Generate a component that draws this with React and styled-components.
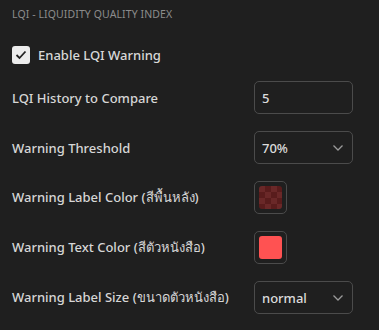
import styled, { createGlobalStyle } from 'styled-components'

const Global = createGlobalStyle`
  html, body {
    margin: 0;
    padding: 0;
    background: #1f1f1f;
  }
  body {
    font-family: "Noto Sans", "Open Sans", "DejaVu Sans", sans-serif;
    color: #d6d6d6;
  }
`

const Panel = styled.div`
  width: 379px;
  height: 330px;
  box-sizing: border-box;
  padding: 6px 26px 0 12px;
  background: #1f1f1f;
  display: flex;
  flex-direction: column;
`

const Title = styled.div`
  height: 16px;
  line-height: 16px;
  font-size: 10.5px;
  color: #8c8c8c;
  text-transform: uppercase;
  letter-spacing: 0.1px;
`

const CheckRow = styled.label`
  display: flex;
  align-items: center;
  gap: 8px;
  margin-top: 23px;
  height: 20px;
  font-size: 13px;
  font-weight: 500;
  color: #d8d8d8;
`

const Box = styled.span`
  width: 18px;
  height: 18px;
  border-radius: 3px;
  background: #ececec;
  display: flex;
  align-items: center;
  justify-content: center;
`

const Rows = styled.div`
  display: flex;
  flex-direction: column;
  gap: 17px;
  margin-top: 16px;
`

const Row = styled.div`
  display: flex;
  align-items: center;
  justify-content: space-between;
  height: 33px;
`

const Label = styled.span`
  font-size: 13px;
  font-weight: 500;
  color: #d6d6d6;
`

const Field = styled.div`
  width: 99px;
  height: 33px;
  box-sizing: border-box;
  border: 1px solid #4b4b4b;
  border-radius: 5px;
  display: flex;
  align-items: center;
  justify-content: space-between;
  padding: 0 8px 0 7px;
  font-size: 13px;
  font-weight: 500;
  color: #dcdcdc;
`

const SwatchSlot = styled.div`
  width: 99px;
  display: flex;
`

const Swatch = styled.div`
  width: 33px;
  height: 33px;
  box-sizing: border-box;
  border: 1px solid #4b4b4b;
  border-radius: 5px;
  padding: 4px;
`

const Fill = styled.div`
  width: 100%;
  height: 100%;
  border-radius: 3px;
  background: ${p => p.$checker
    ? `repeating-conic-gradient(#591c1c 0 25%, #6a2828 0 50%) 0 0 / 12px 12px`
    : p.$color};
`

const Chevron = () => (
  <svg width="12" height="8" viewBox="0 0 12 8">
    <path d="M1.5 1.5 L6 6 L10.5 1.5" fill="none" stroke="#9a9a9a" strokeWidth="1.3" />
  </svg>
)

const App = () => (
  <>
    <Global />
    <Panel>
      <Title>LQI - Liquidity Quality Index</Title>
      <CheckRow>
        <Box>
          <svg width="12" height="10" viewBox="0 0 12 10">
            <path d="M1.5 5 L4.5 8 L10.5 1.5" fill="none" stroke="#222" strokeWidth="1.8" />
          </svg>
        </Box>
        Enable LQI Warning
      </CheckRow>
      <Rows>
        <Row>
          <Label>LQI History to Compare</Label>
          <Field>5</Field>
        </Row>
        <Row>
          <Label>Warning Threshold</Label>
          <Field>70%<Chevron /></Field>
        </Row>
        <Row>
          <Label>Warning Label Color (สีพื้นหลัง)</Label>
          <SwatchSlot>
            <Swatch><Fill $checker /></Swatch>
          </SwatchSlot>
        </Row>
        <Row>
          <Label>Warning Text Color (สีตัวหนังสือ)</Label>
          <SwatchSlot>
            <Swatch><Fill $color="#ff5252" /></Swatch>
          </SwatchSlot>
        </Row>
        <Row>
          <Label>Warning Label Size (ขนาดตัวหนังสือ)</Label>
          <Field>normal<Chevron /></Field>
        </Row>
      </Rows>
    </Panel>
  </>
)

export default App
